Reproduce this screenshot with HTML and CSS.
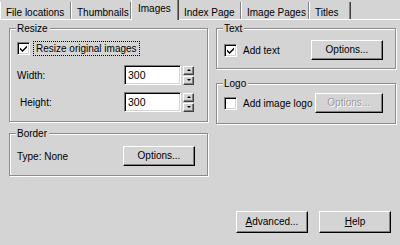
FILE: index.html
```html
<!DOCTYPE html>
<html>
<head>
<meta charset="utf-8">
<link rel="stylesheet" href="styles.css">
</head>
<body>
<div class="window">
  <div class="tabs">
    <div class="tab w1">File locations</div>
    <div class="tab w2">Thumbnails</div>
    <div class="tab w3 selected">Images</div>
    <div class="tab w4">Index Page</div>
    <div class="tab w5">Image Pages</div>
    <div class="tab w6">Titles</div>
  </div>
  <div class="panel">
    <div class="columns">
      <div class="col left">
        <div class="group resize">
          <span class="legend">Resize</span>
          <div class="check-row">
            <span class="checkbox"><svg width="9" height="9" viewBox="0 0 9 9"><path d="M1 3.5 L3.5 6 L8 1.5 L8 3.5 L3.5 8 L1 5.5 Z" fill="#000"/></svg></span>
            <span class="check-label focus">Resize original images</span>
          </div>
          <div class="field-row">
            <span class="field-label">Width:</span>
            <span class="input">300</span>
            <span class="spin"><span class="spin-btn"><i class="up"></i></span><span class="spin-btn"><i class="down"></i></span></span>
          </div>
          <div class="field-row">
            <span class="field-label indent">Height:</span>
            <span class="input">300</span>
            <span class="spin"><span class="spin-btn"><i class="up"></i></span><span class="spin-btn"><i class="down"></i></span></span>
          </div>
        </div>
        <div class="group border-group">
          <span class="legend">Border</span>
          <div class="row">
            <span>Type: None</span>
            <span class="btn">Options...</span>
          </div>
        </div>
      </div>
      <div class="col right">
        <div class="group text-group">
          <span class="legend">Text</span>
          <div class="row">
            <span class="check-row">
              <span class="checkbox"><svg width="9" height="9" viewBox="0 0 9 9"><path d="M1 3.5 L3.5 6 L8 1.5 L8 3.5 L3.5 8 L1 5.5 Z" fill="#000"/></svg></span>
              <span class="check-label">Add text</span>
            </span>
            <span class="btn">Options...</span>
          </div>
        </div>
        <div class="group logo-group">
          <span class="legend">Logo</span>
          <div class="row">
            <span class="check-row">
              <span class="checkbox"></span>
              <span class="check-label">Add image logo</span>
            </span>
            <span class="btn disabled">Options...</span>
          </div>
        </div>
      </div>
    </div>
    <div class="footer">
      <span class="btn big"><u>A</u>dvanced...</span>
      <span class="btn big"><u>H</u>elp</span>
    </div>
  </div>
</div>
</body>
</html>
```
FILE: styles.css
```css
html, body {
  margin: 0;
  padding: 0;
}
body {
  background: #d4d4d4;
  font-family: "Liberation Sans", Arial, sans-serif;
  font-size: 10px;
  color: #000;
  white-space: nowrap;
}
.window {
  width: 400px;
  height: 245px;
  overflow: hidden;
  background: #d4d4d4;
}
.tabs {
  display: flex;
  height: 19px;
  align-items: stretch;
}
.tab {
  box-sizing: border-box;
  border-left: 1px solid #fff;
  border-right: 1px solid #808080;
  box-shadow: 1px 0 0 #404040;
  padding: 5px 0 0 5px;
  margin-top: 2px;
}
.tab.selected {
  margin-top: 0;
  padding-top: 3px;
  padding-left: 6px;
  margin-bottom: -1px;
  position: relative;
  z-index: 1;
  background: #d4d4d4;
}
.w1 { width: 71px; }
.w2 { width: 60px; }
.w3 { width: 47px; }
.w4 { width: 63px; }
.w5 { width: 68px; }
.w6 { width: 41px; }
.panel {
  border-top: 1px solid #fff;
  padding: 8px 0 0 9px;
}
.columns {
  display: flex;
  gap: 8px;
  align-items: flex-start;
}
.col {
  display: flex;
  flex-direction: column;
}
.left {
  width: 199px;
  gap: 11px;
}
.right {
  width: 180px;
  gap: 14px;
}
.group {
  position: relative;
  box-sizing: border-box;
  border: 1px solid #8c8c8c;
  box-shadow: inset 1px 1px 0 #fff, 1px 1px 0 #fff;
  padding: 0 12px 0 7px;
}
.legend {
  position: absolute;
  top: -6px;
  left: 6px;
  padding: 0 2px 0 1px;
  background: #d4d4d4;
  line-height: 11px;
}
.resize {
  height: 94px;
  padding-top: 13px;
}
.border-group {
  height: 43px;
  padding-top: 12px;
}
.text-group {
  height: 41px;
  padding-top: 11px;
}
.logo-group {
  height: 41px;
  padding-top: 9px;
}
.row {
  display: flex;
  align-items: center;
  justify-content: space-between;
}
.check-row {
  display: flex;
  align-items: center;
  gap: 4px;
}
.checkbox {
  box-sizing: border-box;
  width: 13px;
  height: 13px;
  background: #fff;
  border-top: 1px solid #808080;
  border-left: 1px solid #808080;
  border-bottom: 1px solid #fff;
  border-right: 1px solid #fff;
  box-shadow: inset 1px 1px 0 #000, inset -1px -1px 0 #d4d4d4;
  display: flex;
  align-items: center;
  justify-content: center;
}
.checkbox svg {
  display: block;
}
.check-label {
  line-height: 11px;
  padding: 1px 2px;
}
.check-label.focus {
  outline: 1px dotted #000;
}
.field-row {
  display: flex;
  align-items: center;
  margin-top: 10px;
}
.field-row + .field-row {
  margin-top: 7px;
}
.field-label {
  width: 107px;
}
.field-label.indent {
  padding-left: 3px;
  width: 104px;
}
.input {
  box-sizing: border-box;
  width: 57px;
  height: 20px;
  background: #fff;
  border-top: 1px solid #808080;
  border-left: 1px solid #808080;
  border-bottom: 1px solid #fff;
  border-right: 1px solid #fff;
  box-shadow: inset 1px 1px 0 #000, inset -1px -1px 0 #d4d4d4;
  padding: 3px 0 0 3px;
  font-size: 10.5px;
}
.spin {
  display: flex;
  flex-direction: column;
  gap: 1px;
  margin-left: 2px;
}
.spin-btn {
  box-sizing: border-box;
  width: 11px;
  height: 9px;
  background: #d4d4d4;
  border-top: 1px solid #fff;
  border-left: 1px solid #fff;
  border-right: 1px solid #404040;
  border-bottom: 1px solid #404040;
  box-shadow: inset -1px -1px 0 #808080;
  display: flex;
  align-items: center;
  justify-content: center;
}
.spin-btn i {
  width: 0;
  height: 0;
  border-left: 2px solid transparent;
  border-right: 2px solid transparent;
}
.spin-btn i.up {
  border-bottom: 2px solid #000;
}
.spin-btn i.down {
  border-top: 2px solid #000;
}
.btn {
  box-sizing: border-box;
  width: 72px;
  height: 20px;
  background: #d4d4d4;
  border-top: 1px solid #fff;
  border-left: 1px solid #fff;
  border-right: 1px solid #000;
  border-bottom: 1px solid #000;
  box-shadow: inset -1px -1px 0 #808080;
  display: flex;
  align-items: center;
  justify-content: center;
  padding-bottom: 1px;
}
.btn.disabled {
  color: #9a9a9a;
  text-shadow: 1px 1px 0 #fff;
}
.btn.big {
  height: 22px;
}
.footer {
  display: flex;
  justify-content: flex-end;
  gap: 11px;
  padding-right: 9px;
  margin-top: 35px;
}
```
